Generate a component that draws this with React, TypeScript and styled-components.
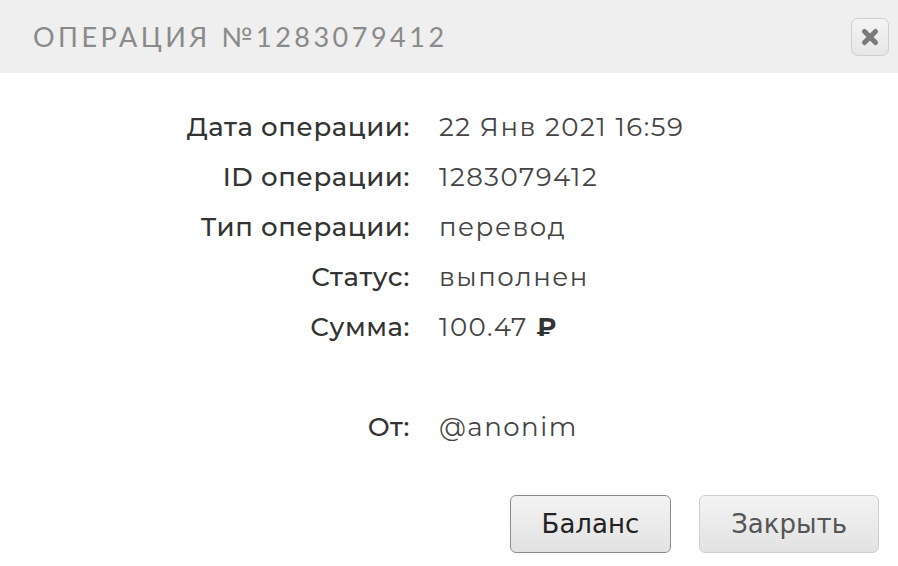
import { Fragment } from "react";
import styled, { createGlobalStyle } from "styled-components";

const GlobalStyle = createGlobalStyle`
  body {
    margin: 0;
    background: #ffffff;
  }
`;

const Modal = styled.div`
  width: 898px;
  height: 566px;
  background: #ffffff;
  display: flex;
  flex-direction: column;
`;

const Header = styled.div`
  height: 73px;
  background: #efefef;
  display: flex;
  align-items: center;
  justify-content: space-between;
  padding: 0 9px 0 33px;
  box-sizing: border-box;
`;

const Title = styled.h1`
  margin: 0;
  font-family: "Lato", "Liberation Sans", sans-serif;
  font-weight: 400;
  font-size: 27px;
  letter-spacing: 3.5px;
  color: #8a8a8a;
`;

const CloseButton = styled.button`
  width: 38px;
  height: 38px;
  padding: 0;
  border: 1px solid #cfcfcf;
  border-radius: 7px;
  background: linear-gradient(#f4f4f4, #e6e6e6);
  display: flex;
  align-items: center;
  justify-content: center;
  cursor: pointer;
`;

const Details = styled.div`
  display: grid;
  grid-template-columns: 410px 1fr;
  column-gap: 29px;
  grid-auto-rows: 50px;
  align-items: center;
  padding-top: 29px;
  font-family: "Montserrat", "Noto Sans", "Open Sans", sans-serif;
  font-size: 26px;
`;

const Label = styled.div`
  text-align: right;
  font-weight: 500;
  letter-spacing: 0.6px;
  color: #333333;
`;

const Value = styled.div`
  font-weight: 400;
  letter-spacing: 1.5px;
  color: #444444;
`;

const Ruble = styled.span`
  font-weight: 700;
  color: #333333;
`;

const Spacer = styled.div`
  grid-column: 1 / -1;
`;

const Actions = styled.div`
  display: flex;
  justify-content: flex-end;
  gap: 28px;
  padding: 43px 19px 0 0;
`;

const Button = styled.button<{ $primary?: boolean }>`
  height: 58px;
  padding: 0 31px;
  border-radius: 6px;
  border: 1px solid ${(p) => (p.$primary ? "#8c8c8c" : "#cfcfcf")};
  background: linear-gradient(#f3f3f3, #e2e2e2);
  font-family: "DejaVu Sans", sans-serif;
  font-size: 26px;
  color: ${(p) => (p.$primary ? "#222222" : "#555555")};
  cursor: pointer;
`;

const rows = [
  { label: "Дата операции:", value: "22 Янв 2021 16:59" },
  { label: "ID операции:", value: "1283079412" },
  { label: "Тип операции:", value: "перевод" },
  { label: "Статус:", value: "выполнен" },
];

function App() {
  return (
    <Modal>
      <GlobalStyle />
      <Header>
        <Title>ОПЕРАЦИЯ №1283079412</Title>
        <CloseButton aria-label="Закрыть">
          <svg width="20" height="20" viewBox="0 0 20 20">
            <path
              d="M4.5 4.5 L15.5 15.5 M15.5 4.5 L4.5 15.5"
              stroke="#7a7a7a"
              strokeWidth="5"
              strokeLinecap="round"
            />
          </svg>
        </CloseButton>
      </Header>
      <Details>
        {rows.map((row) => (
          <Fragment key={row.label}>
            <Label>{row.label}</Label>
            <Value>{row.value}</Value>
          </Fragment>
        ))}
        <Label>Сумма:</Label>
        <Value>
          100.47 <Ruble>₽</Ruble>
        </Value>
        <Spacer />
        <Label>От:</Label>
        <Value>@anonim</Value>
      </Details>
      <Actions>
        <Button $primary>Баланс</Button>
        <Button>Закрыть</Button>
      </Actions>
    </Modal>
  );
}

export default App;
